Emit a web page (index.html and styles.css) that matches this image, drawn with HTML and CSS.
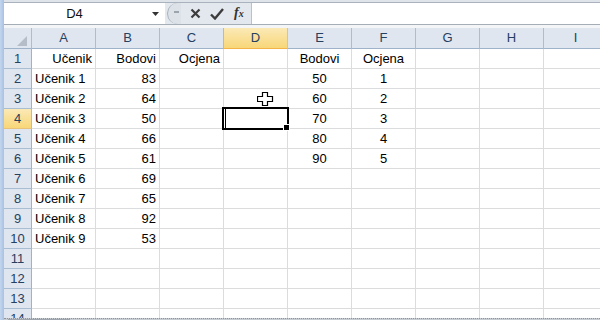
FILE: index.html
```html
<!DOCTYPE html>
<html>
<head>
<meta charset="utf-8">
<link rel="stylesheet" href="styles.css">
</head>
<body>
<div class="app">
  <div class="strip"></div>
  <div class="main">
    <div class="topline"></div>
    <div class="fbar">
      <div class="namebox">
        <span class="ref">D4</span>
        <svg class="dd" width="7" height="4" viewBox="0 0 7 4"><path d="M0 0H7L3.5 4Z" fill="#333"/></svg>
      </div>
      <div class="btns">
        <div class="grip"><span class="dash"></span></div>
        <svg class="ico" width="11" height="11" viewBox="0 0 11 11"><path d="M1.5 1.5L9.5 9.5M9.5 1.5L1.5 9.5" stroke="#3c3c3c" stroke-width="2.2"/></svg>
        <svg class="ico" width="14" height="12" viewBox="0 0 14 12"><path d="M1 6.5L5 10.5L13 1" stroke="#3c3c3c" stroke-width="2.4" fill="none"/></svg>
        <span class="fx">f<span class="sx">x</span></span>
      </div>
      <div class="input"></div>
    </div>
    <div class="gap"></div>
    <div class="sheet">
      <div class="grid">
        <div class="h corner"><span class="tri"></span></div><div class="h">A</div><div class="h">B</div><div class="h">C</div><div class="h hs">D</div><div class="h">E</div><div class="h">F</div><div class="h">G</div><div class="h">H</div><div class="h">I</div>

        <div class="r">1</div><div class="n">Učenik</div><div class="n">Bodovi</div><div class="n">Ocjena</div><div></div><div class="m">Bodovi</div><div class="m">Ocjena</div><div></div><div></div><div></div>
        <div class="r">2</div><div>Učenik 1</div><div class="n">83</div><div></div><div></div><div class="m">50</div><div class="m">1</div><div></div><div></div><div></div>
        <div class="r">3</div><div>Učenik 2</div><div class="n">64</div><div></div><div></div><div class="m">60</div><div class="m">2</div><div></div><div></div><div></div>
        <div class="r rs">4</div><div>Učenik 3</div><div class="n">50</div><div></div><div class="active"><span class="caret"></span><span class="handle"></span></div><div class="m">70</div><div class="m">3</div><div></div><div></div><div></div>
        <div class="r">5</div><div>Učenik 4</div><div class="n">66</div><div></div><div></div><div class="m">80</div><div class="m">4</div><div></div><div></div><div></div>
        <div class="r">6</div><div>Učenik 5</div><div class="n">61</div><div></div><div></div><div class="m">90</div><div class="m">5</div><div></div><div></div><div></div>
        <div class="r">7</div><div>Učenik 6</div><div class="n">69</div><div></div><div></div><div></div><div></div><div></div><div></div><div></div>
        <div class="r">8</div><div>Učenik 7</div><div class="n">65</div><div></div><div></div><div></div><div></div><div></div><div></div><div></div>
        <div class="r">9</div><div>Učenik 8</div><div class="n">92</div><div></div><div></div><div></div><div></div><div></div><div></div><div></div>
        <div class="r">10</div><div>Učenik 9</div><div class="n">53</div><div></div><div></div><div></div><div></div><div></div><div></div><div></div>
        <div class="r">11</div><div></div><div></div><div></div><div></div><div></div><div></div><div></div><div></div><div></div>
        <div class="r">12</div><div></div><div></div><div></div><div></div><div></div><div></div><div></div><div></div><div></div>
        <div class="r">13</div><div></div><div></div><div></div><div></div><div></div><div></div><div></div><div></div><div></div>
        <div class="r">14</div><div></div><div></div><div></div><div></div><div></div><div></div><div></div><div></div><div></div>
      </div>
      <svg class="cursor" width="17" height="16" viewBox="0 0 17 16"><path d="M5.5 0.5H10.5V4.5H15.5V9.5H10.5V13.5H5.5V9.5H0.5V4.5H5.5Z" fill="#fff" stroke="#000" stroke-width="1.2" stroke-linejoin="miter"/></svg>
    </div>
    <div class="tabs">
      <div class="tab"></div>
      <div class="tabfill"></div>
    </div>
  </div>
</div>
</body>
</html>
```

FILE: styles.css
```css
html, body {
  margin: 0;
  padding: 0;
  background: #fff;
}
body {
  width: 600px;
  height: 320px;
  overflow: hidden;
  font-family: "Liberation Sans", Arial, sans-serif;
}
.app {
  display: flex;
  width: 600px;
  height: 320px;
  overflow: hidden;
}
.strip {
  width: 4px;
  flex: none;
  background: linear-gradient(to right, #c3d6ee, #a7c2e4);
}
.main {
  flex: none;
  width: 596px;
  display: flex;
  flex-direction: column;
  overflow: hidden;
}
.topline {
  height: 3px;
  background: #dfe4ea;
  border-bottom: 1px solid #a9b2bd;
  box-sizing: border-box;
}
.fbar {
  height: 22px;
  display: flex;
  border-bottom: 1px solid #a5adb7;
  box-sizing: border-box;
}
.namebox {
  width: 160px;
  flex: none;
  margin-left: 1px;
  background: #fff;
  display: flex;
  align-items: center;
  position: relative;
}
.ref {
  flex: 1;
  text-align: center;
  font-size: 13px;
  color: #111;
  padding-right: 8px;
}
.dd {
  margin-right: 6px;
  margin-top: 1px;
}
.btns {
  width: 86px;
  flex: none;
  display: flex;
  align-items: center;
  background: #e3e8ef;
  border-right: 1px solid #b9c2cc;
}
.grip {
  width: 14px;
  height: 21px;
  border-radius: 11px 0 0 11px;
  background: #dde2e8;
  border-left: 1px solid #a8b0ba;
  margin-left: 2px;
  display: flex;
  align-items: center;
  justify-content: center;
  box-sizing: border-box;
}
.dash {
  width: 5px;
  height: 2px;
  background: #9ca4ae;
  margin-left: 4px;
  margin-top: -3px;
}
.ico {
  margin-left: 9px;
}
.fx {
  margin-left: 10px;
  font-family: "Liberation Serif", "Times New Roman", serif;
  font-style: italic;
  font-weight: bold;
  font-size: 14px;
  color: #333;
  line-height: 14px;
}
.sx {
  font-size: 10px;
}
.input {
  flex: 1;
  background: #fff;
}
.gap {
  height: 3px;
  background: #f4f5f7;
}
.sheet {
  position: relative;
  height: 290px;
  overflow: hidden;
}
.grid {
  display: grid;
  grid-template-columns: 28px repeat(9, 64px);
  grid-template-rows: 21px;
  grid-auto-rows: 20px;
}
.grid > div {
  box-sizing: border-box;
  border-right: 1px solid #dadcdd;
  border-bottom: 1px solid #dadcdd;
  font-size: 13px;
  line-height: 19px;
  padding: 0 3px;
  white-space: nowrap;
  overflow: hidden;
  color: #000;
}
.grid > .n { text-align: right; padding-right: 3px; }
.grid > .m { text-align: center; }
.grid > .h {
  background: #dfe6ef;
  border-right: 1px solid #a9bdd3;
  border-bottom: 1px solid #9eb3ca;
  text-align: center;
  color: #26405f;
  line-height: 20px;
}
.grid > .corner {
  position: relative;
}
.tri {
  position: absolute;
  right: 4px;
  bottom: 2px;
  width: 0;
  height: 0;
  border-left: 10px solid transparent;
  border-bottom: 10px solid #b5bec8;
}
.grid > .hs {
  background: linear-gradient(#fbe9b6, #f8d779);
  border-bottom: 1px solid #f2b446;
  border-right: 1px solid #e9c27a;
}
.grid > .r {
  background: #dfe6ef;
  border-right: 1px solid #9eb3ca;
  border-bottom: 1px solid #a9bdd3;
  text-align: center;
  color: #26405f;
  padding: 0;
}
.grid > .rs {
  background: linear-gradient(#fbe9b6, #f8d779);
  border-right: 1px solid #f2b446;
  border-bottom: 1px solid #e9c27a;
}
.grid > .active {
  position: relative;
  overflow: visible;
}
.active::after {
  content: "";
  position: absolute;
  left: -2px;
  top: -2px;
  right: -2px;
  bottom: -2px;
  border: 2px solid #000;
}
.caret {
  position: absolute;
  left: 1px;
  top: 0;
  width: 1px;
  height: 19px;
  background: #000;
}
.handle {
  position: absolute;
  right: -3px;
  bottom: -3px;
  width: 5px;
  height: 5px;
  background: #000;
  border: 1px solid #fff;
  z-index: 2;
}
.grid > div:has(.handle) { z-index: 1; }
.cursor {
  position: absolute;
  left: 253px;
  top: 64px;
}
.tabs {
  flex: 1;
  display: flex;
  background: #c7ccd3;
  border-top: 1px dotted #8e959d;
}
.tab {
  width: 60px;
  margin-left: 4px;
  background: #fff;
  border: 1px solid #9ea5ad;
  border-bottom: none;
}
.tabfill {
  flex: 1;
}
```
